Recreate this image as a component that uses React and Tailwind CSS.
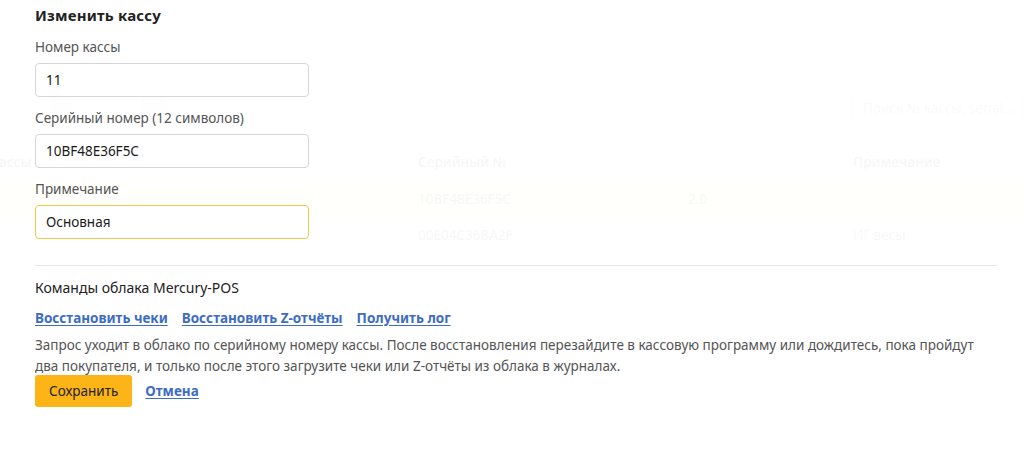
import React from "react";

const font = { fontFamily: '"Segoe UI", "Noto Sans", "Open Sans", sans-serif' };

function Background() {
  return (
    <div className="w-[1024px] h-[456px] text-[13.5px] text-[#666666]">
      <div className="h-[84px]" />
      <div className="flex items-start h-[42px]">
        <div className="ml-[52px] mt-[10px] w-[20px] h-[20px] rounded-sm bg-[#dddddd]" />
        <div className="ml-[70px] mt-[12px] w-[24px] h-[16px] rounded-sm bg-[#dddddd]" />
        <div className="ml-auto mt-[8px] w-[172px] h-[32px] border border-[#cccccc] rounded-[3px] px-[10px] flex items-center text-[#999999] whitespace-nowrap overflow-hidden">
          Поиск № кассы, serial...
        </div>
      </div>
      <div className="mt-[16px] grid grid-cols-[405px_435px_1fr] border-t border-[#dddddd]">
        <div className="h-[38px] flex items-center font-semibold -ml-[26px]">№ кассы</div>
        <div className="h-[38px] flex items-center px-[12px] font-semibold border-l border-[#dddddd]">Серийный №</div>
        <div className="h-[38px] flex items-center px-[12px] font-semibold border-l border-[#dddddd]">Примечание</div>
        <div className="h-[36px] bg-[#fff2c4]" />
        <div className="h-[36px] flex items-center px-[12px] bg-[#fff2c4] border-l border-[#dddddd]">
          <span className="w-[270px]">10BF48E36F5C</span>
          <span>2.0</span>
        </div>
        <div className="h-[36px] bg-[#fff2c4] border-l border-[#dddddd]" />
        <div className="h-[36px]" />
        <div className="h-[36px] flex items-center px-[12px] border-l border-[#dddddd]">00E04C36BA2F</div>
        <div className="h-[36px] flex items-center px-[12px] border-l border-[#dddddd]">ИГ весы</div>
      </div>
    </div>
  );
}

function Field({ label, value, focused }) {
  return (
    <div className="flex flex-col">
      <label className="text-[13.5px] leading-[20px] text-[#555555] mb-[6px]">{label}</label>
      <div
        className={
          "w-[274px] h-[34px] rounded-[4px] border bg-white flex items-center px-[10px] text-[13.5px] text-[#1a1a1a] " +
          (focused ? "border-[#f2c94c]" : "border-[#d6d6d6]")
        }
      >
        {value}
      </div>
    </div>
  );
}

export default function App() {
  return (
    <div className="relative w-[1024px] h-[456px] overflow-hidden bg-white" style={font}>
      <Background />
      <div className="absolute inset-0 bg-white/95">
        <div className="pl-[35px] pr-[27px] pt-[5px] flex flex-col">
          <h2 className="text-[15px] leading-[20px] font-bold tracking-[0.2px] text-[#222222]">Изменить кассу</h2>
          <div className="mt-[12px] flex flex-col gap-[11px]">
            <Field label="Номер кассы" value="11" />
            <Field label="Серийный номер (12 символов)" value="10BF48E36F5C" />
            <Field label="Примечание" value="Основная" focused />
          </div>
          <div className="mt-[26px] border-t border-[#e6e6e6]" />
          <div className="mt-[12px] text-[14px] leading-[20px] text-[#222222]">Команды облака Mercury-POS</div>
          <div className="mt-[10px] flex gap-[14px] text-[13.5px] leading-[20px] font-bold text-[#3d6cc4]">
            <a className="underline underline-offset-2">Восстановить чеки</a>
            <a className="underline underline-offset-2">Восстановить Z-отчёты</a>
            <a className="underline underline-offset-2">Получить лог</a>
          </div>
          <p className="mt-[7px] text-[13.5px] leading-[21px] text-[#555555]">
            Запрос уходит в облако по серийному номеру кассы. После восстановления перезайдите в кассовую программу или дождитесь, пока пройдут два покупателя, и только после этого загрузите чеки или Z-отчёты из облака в журналах.
          </p>
          <div className="-mt-[2px] flex items-center gap-[13px]">
            <button className="h-[32px] px-[14px] rounded-[3px] bg-[#fcb417] text-[13.5px] text-[#222222]">Сохранить</button>
            <a className="text-[13.5px] font-bold text-[#3d6cc4] underline underline-offset-2">Отмена</a>
          </div>
        </div>
      </div>
    </div>
  );
}
